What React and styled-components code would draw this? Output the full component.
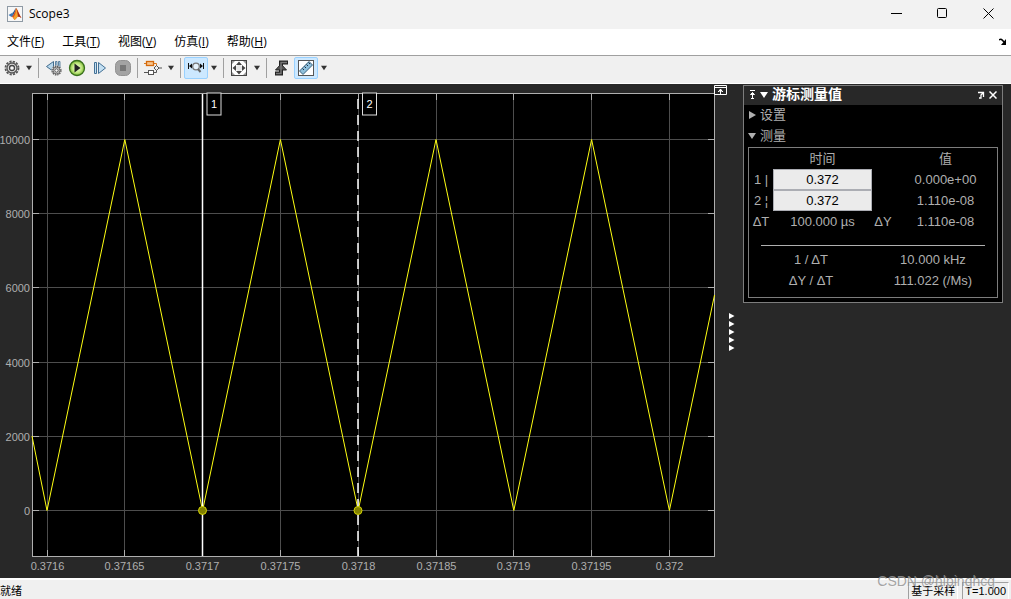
import React from 'react';
import styled, { createGlobalStyle } from 'styled-components';

const Global = createGlobalStyle`
  * { box-sizing: border-box; }
  body { margin: 0; background: #282828; }
  button, input { font: inherit; color: inherit; }
  button { padding: 0; margin: 0; border: 0; background: none; }
`;

const ui = '"Open Sans", "Noto Sans CJK SC", sans-serif';
const plain = '"Liberation Sans", "Noto Sans CJK SC", sans-serif';

const Window = styled.div`
  position: relative;
  display: flex;
  flex-direction: column;
  min-height: 100vh;
  background: #282828;
  color: #000;
  font: 12px/16px ${ui};
`;

const TitleBar = styled.header`
  display: flex;
  align-items: center;
  height: 29px;
  padding: 0 0 2px 7px;
  background: #f2f2f2;
`;

const Title = styled.h1`
  flex: 1;
  margin: 0 0 0 6px;
  font-size: 12px;
  font-weight: 400;
`;

const WindowButton = styled.button`
  display: grid;
  place-items: center;
  width: 46px;
  height: 27px;
`;

const MenuBar = styled.nav`
  display: flex;
  align-items: center;
  gap: 18px;
  height: 26px;
  padding: 0 4px 0 7px;
  background: #fff;
`;

const MenuButton = styled.button`
  white-space: nowrap;
`;

const DockButton = styled.button`
  display: flex;
  margin-left: auto;
`;

const ToolBar = styled.div`
  display: flex;
  align-items: center;
  height: 29px;
  padding: 0 0 3px;
  border-top: 1px solid #a0a0a0;
  border-bottom: 1px solid #fff;
  background: #f0f0f0;
`;

const Tool = styled.button`
  display: grid;
  place-items: center;
  width: ${p => p.$wide ? 24 : 23}px;
  height: 22px;
  border: 1px solid ${p => p.$on ? '#99d1ff' : 'transparent'};
  border-radius: 2px;
  background: ${p => p.$on ? '#cce8ff' : 'transparent'};
`;

const Arrow = styled.button`
  display: grid;
  place-items: center;
  width: 12px;
  height: 22px;
`;

const Divider = styled.div`
  width: 1px;
  height: 20px;
  margin: 0 3px;
  background: #a0a0a0;
`;

const Main = styled.main`
  display: flex;
  flex: 1;
`;

const PlotPane = styled.section`
  flex: 1;
  min-width: 0;
`;

const Plot = styled.svg`
  display: block;
  width: 100%;
  height: auto;
  font: 11px ${plain};
`;

const Splitter = styled.button`
  display: flex;
  align-items: center;
  width: 14px;
  padding-top: 2px;
`;

const Panel = styled.aside`
  align-self: flex-start;
  width: 260px;
  margin: 1px 8px 0 0;
  border: 1px solid #7d7d7d;
  background: #000;
  color: #afafaf;
  font: 13px/21px ${plain};
`;

const PanelHeader = styled.div`
  display: flex;
  align-items: center;
  gap: 4px;
  height: 19px;
  padding: 0 5px 2px;
  background: #282828;
  color: #fff;
`;

const PanelTitle = styled.h2`
  flex: 1;
  margin: 0;
  font-size: 14px;
  line-height: 17px;
  font-weight: 700;
`;

const IconButton = styled.button`
  display: flex;
`;

const Section = styled.button`
  display: flex;
  align-items: center;
  gap: 4px;
  width: 100%;
  height: 21px;
  padding: 0 0 2px 4px;
  text-align: left;
`;

const Measurements = styled.div`
  margin: 0 4px 4px;
  padding-bottom: 6px;
  border: 1px solid #7d7d7d;
`;

const Readings = styled.table`
  width: 100%;
  table-layout: fixed;
  border-collapse: collapse;
  th, td { height: 21px; padding: 0; font-weight: 400; text-align: center; white-space: nowrap; }
`;

const Rule = styled.hr`
  height: 1px;
  margin: 13px 12px 3px;
  border: 0;
  background: #afafaf;
`;

const TimeInput = styled.input`
  display: block;
  width: 100%;
  height: 21px;
  padding: 0;
  border: 1px solid #abadb3;
  background: #ebebeb;
  color: #000;
  text-align: center;
`;

const StatusBar = styled.footer`
  display: flex;
  align-items: flex-end;
  gap: 4px;
  height: 21px;
  padding-right: 2px;
  border-top: 2px solid #fff;
  background: #f0f0f0;
  font: 11px/16px ${plain};
`;

const Ready = styled.span`
  flex: 1;
`;

const StatusCell = styled.span`
  padding: 0 2px;
  border-top: 1px solid #a0a0a0;
  border-left: 1px solid #a0a0a0;
  border-right: 1px solid #fff;
  white-space: nowrap;
`;

const Watermark = styled.span`
  position: absolute;
  right: 16px;
  bottom: 8px;
  color: rgba(150, 150, 150, 0.85);
  font: 14px/20px ${plain};
  text-shadow: 1px 1px 0 rgba(255, 255, 255, 0.3);
  pointer-events: none;
`;

const Down = ({ size = 6, color = '#333' }) => (
  <svg width={size} height={size} viewBox="0 0 8 8"><path d="M0 1h8L4 7z" fill={color} /></svg>
);

const Gear = ({ size = 16 }) => (
  <svg width={size} height={size} viewBox="0 0 16 16" fill="none">
    <circle cx="8" cy="8" r="6.5" stroke="#555" strokeWidth="1.8" strokeDasharray="2.2 1.2" />
    <circle cx="8" cy="8" r="5" fill="#ddd" stroke="#555" strokeWidth="1.300" />
    <circle cx="8" cy="8" r="2.500" fill="#f7f7f7" stroke="#444" strokeWidth="1.300" />
  </svg>
);

const MatlabIcon = () => (
  <svg width="16" height="16" viewBox="0 0 16 16">
    <rect x=".5" y=".5" width="15" height="15" fill="#f7f7f7" stroke="#8f9aa5" />
    <path d="M1.500 9 5 7l2 2-2.500 2z" fill="#3b78b8" />
    <path d="M5 7c2-.5 2.500-4 4-5L7 9z" fill="#265b91" />
    <path d="M9 2c-1 3-2 7-4.500 9 2 0 2 2 3 3 2-1 2.500-3.500 4-3.500 1 0 1.800 1 3 1.500C12.500 9 10.500 3 9 2z" fill="#d9541e" />
    <path d="M9 2c0 4-.5 7-3 10l1.500 2c2-1 2.200-3.500 3.500-3.500C10.500 8 10 4 9 2z" fill="#f3a12b" />
    <path d="M9 2c1.500 2 3 7 5.500 10-1.200-.5-2-1.500-3.500-1.500C11 7 10 4 9 2z" fill="#9e2b1b" />
  </svg>
);

const StepBack = () => (
  <svg width="18" height="18" viewBox="0 0 18 18">
    <path d="M8.500 2.500v10L1.500 7.500z" fill="#b9d8ec" stroke="#416c8e" />
    <path d="M10.500 2.500h1.500v8h-1.500zM13.500 2.500h1.500v8h-1.500z" fill="#b9d8ec" stroke="#416c8e" strokeWidth=".8" />
    <circle cx="11.500" cy="11.500" r="5" fill="#f0f0f0" />
    <g transform="translate(6 6)"><Gear size={11} /></g>
  </svg>
);

const Run = () => (
  <svg width="18" height="18" viewBox="0 0 18 18">
    <defs><radialGradient id="run"><stop stopColor="#f4ffe0" /><stop offset=".6" stopColor="#c4ea85" /><stop offset="1" stopColor="#7bb832" /></radialGradient></defs>
    <circle cx="9" cy="9" r="7.500" fill="url(#run)" stroke="#39701d" strokeWidth="1.300" />
    <path d="M6.500 4.500 12.500 9l-6 4.500z" fill="#222" />
  </svg>
);

const StepForward = () => (
  <svg width="16" height="16" viewBox="0 0 16 16" fill="#c3dff2" stroke="#437095">
    <path d="M2.500 2.500h2v11h-2zM6.500 2.500 13.500 8l-7 5.500z" />
  </svg>
);

const Stop = () => (
  <svg width="18" height="18" viewBox="0 0 18 18">
    <rect x="1.500" y="1.500" width="15" height="15" rx="5" fill="#a3a3a3" stroke="#929292" />
    <path d="M6 6h6v6H6z" fill="#777" />
  </svg>
);

const Blocks = () => (
  <svg width="18" height="18" viewBox="0 0 18 18" fill="none">
    <path d="M0 13.500h4M9 13.500h3.500v-2.500M15 9h3" stroke="#555" />
    <path d="M0 4.500h3M9 4.500h3.500v2.500" stroke="#d97a20" />
    <rect x="2.500" y="2.500" width="7" height="4" fill="#f8c58e" stroke="#d4690c" strokeWidth="1.300" />
    <rect x="4.500" y="11.500" width="5" height="4" fill="#fff" stroke="#555" />
    <path d="m12.500 6.500 2.500 2.500-2.500 2.500L10 9z" fill="#eee" stroke="#555" />
  </svg>
);

const ZoomX = () => (
  <svg width="18" height="16" viewBox="0 0 18 16" fill="none">
    <path d="M1.500 3v6M16.500 3v6" stroke="#111" />
    <path d="M2 6l3-2.500v5zM16 6 13 3.500v5z" fill="#111" />
    <circle cx="9" cy="6.500" r="3.300" fill="#e6f3fd" stroke="#777" strokeWidth="1.300" />
    <path d="m11 9 2.500 3" stroke="#666" strokeWidth="2" />
  </svg>
);

const Fit = () => (
  <svg width="18" height="18" viewBox="0 0 18 18">
    <rect x="1.500" y="1.500" width="15" height="15" fill="#fff" stroke="#444" />
    <path d="M2 2h3L2 5zM16 2v3l-3-3zM2 16v-3l3 3zM16 16h-3l3-3z" fill="#999" />
    <path d="m9 2.500 3 3.500H6zM9 15.500l3-3.500H6zM2.500 9 6 6v6zM15.500 9 12 6v6z" fill="#444" />
    <circle cx="9" cy="9" r="3" fill="#e6e6e6" />
  </svg>
);

const Trigger = () => (
  <svg width="16" height="18" viewBox="0 0 16 18">
    <path d="M1 14.500h6V3.500h7" fill="none" stroke="#222" strokeWidth="4" />
    <path d="m7 5-5.500 6h11z" fill="#555" stroke="#222" />
    <path d="M2 14.500h5V3.500h6" fill="none" stroke="#777" strokeWidth="1.500" />
  </svg>
);

const Ruler = () => (
  <svg width="18" height="18" viewBox="0 0 18 18">
    <rect x="1.500" y="1.500" width="15" height="15" fill="#fff" stroke="#555" />
    <path d="M2.500 12 12 2.500 15.500 6 6 15.500z" fill="#8fc0dc" stroke="#37617e" />
    <path d="m5.500 9.500 1.500 1.500M7.500 7.500 9 9M9.500 5.500 11 7M11.500 3.500 13 5" stroke="#234" />
  </svg>
);

const menus = [['文件', 'F'], ['工具', 'T'], ['视图', 'V'], ['仿真', 'I'], ['帮助', 'H']];

const times = ['0.3716', '0.37165', '0.3717', '0.37175', '0.3718', '0.37185', '0.3719', '0.37195', '0.372'];
const levels = [10000, 8000, 6000, 4000, 2000, 0];
const xAt = i => Math.floor(47 + i * 77.8) + 0.5;
const yAt = value => Math.round(426 - value * 0.0371) + 0.5;
const wave = [
  '32,352',
  ...times.map((_, i) => `${47 + i * 77.8},${i % 2 ? 55.5 : 426.5}`),
  '714.5,211',
].join(' ');

function Cursor({ x, label, dashed }) {
  return (
    <g>
      <path d={`M${x} 10V472`} stroke="#fff" strokeWidth="1.500" strokeDasharray={dashed ? '10 6' : undefined} strokeDashoffset={dashed ? -5 : undefined} />
      <circle cx={x} cy="426.500" r="4" fill="#807f00" stroke="#d5d500" />
      <rect x={x + 4.5} y="9" width="14" height="22" fill="#000" stroke="#ddd" />
      <text x={x + 11.5} y="24" fill="#fff" textAnchor="middle">{label}</text>
    </g>
  );
}

function ScopePlot() {
  return (
    <Plot viewBox="0 0 729 494" role="img" aria-label="Scope signal">
      <rect x="32" y="9" width="683" height="464" fill="#000" />
      {times.map((t, i) => (
        <g key={t}>
          <path d={`M${xAt(i)} 10V472`} stroke="#4d4d4d" />
          <path d={`M${xAt(i)} 10v6M${xAt(i)} 472v-6`} stroke="#afafaf" />
          <text x={xAt(i)} y="486" fill="#afafaf" textAnchor="middle">{t}</text>
        </g>
      ))}
      {levels.map(v => (
        <g key={v}>
          <path d={`M33 ${yAt(v)}H714`} stroke="#4d4d4d" />
          <path d={`M33 ${yAt(v)}h6M714 ${yAt(v)}h-6`} stroke="#afafaf" />
          <text x="30" y={yAt(v) + 4} fill="#afafaf" textAnchor="end">{v}</text>
        </g>
      ))}
      <rect x="32.500" y="9.500" width="682" height="463" fill="none" stroke="#afafaf" />
      <polyline points={wave} fill="none" stroke="#ffff12" />
      <Cursor x={202.5} label="1" />
      <Cursor x={358} label="2" dashed />
      <g fill="none" stroke="#fff">
        <path d="M714.500 1.500h12v9h-12z" fill="#282828" />
        <path d="M715 3.500h11M720.500 10V5M718 8l2.500-2.500L723 8" />
        <path d="M719 7h3l-1.500-2z" fill="#fff" />
      </g>
    </Plot>
  );
}

export default function App() {
  return (
    <Window>
      <Global />
      <TitleBar>
        <MatlabIcon />
        <Title>Scope3</Title>
        <WindowButton aria-label="Minimize"><svg width="11" height="11"><path d="M0 5.500h11" stroke="#000" /></svg></WindowButton>
        <WindowButton aria-label="Maximize"><svg width="11" height="11"><rect x=".5" y=".5" width="9" height="9" rx="1" fill="none" stroke="#000" /></svg></WindowButton>
        <WindowButton aria-label="Close"><svg width="11" height="11"><path d="m.5.5 10 10M10.500.5l-10 10" stroke="#000" /></svg></WindowButton>
      </TitleBar>
      <MenuBar>
        {menus.map(([name, key]) => <MenuButton key={key}>{name}(<u>{key}</u>)</MenuButton>)}
        <DockButton aria-label="Dock window"><svg width="8" height="8" viewBox="0 0 8 8"><path d="M0 2c2-1.500 3-.5 5 2" fill="none" stroke="#000" strokeWidth="1.500" /><path d="M7 1v6H2z" fill="#000" /></svg></DockButton>
      </MenuBar>
      <ToolBar>
        <Tool aria-label="Settings"><Gear /></Tool>
        <Arrow aria-label="Settings menu"><Down /></Arrow>
        <Divider />
        <Tool aria-label="Step back"><StepBack /></Tool>
        <Tool aria-label="Run"><Run /></Tool>
        <Tool aria-label="Step forward"><StepForward /></Tool>
        <Tool aria-label="Stop"><Stop /></Tool>
        <Divider />
        <Tool $wide aria-label="Highlight block"><Blocks /></Tool>
        <Arrow aria-label="Block menu"><Down /></Arrow>
        <Divider />
        <Tool $wide $on aria-label="Zoom X"><ZoomX /></Tool>
        <Arrow aria-label="Zoom menu"><Down /></Arrow>
        <Divider />
        <Tool $wide aria-label="Fit to view"><Fit /></Tool>
        <Arrow aria-label="Fit menu"><Down /></Arrow>
        <Divider />
        <Tool $wide aria-label="Triggers"><Trigger /></Tool>
        <Tool $wide $on aria-label="Cursor measurements"><Ruler /></Tool>
        <Arrow aria-label="Measurements menu"><Down /></Arrow>
      </ToolBar>
      <Main>
        <PlotPane><ScopePlot /></PlotPane>
        <Splitter aria-label="Collapse panel">
          <svg width="6" height="40" viewBox="0 0 6 40" fill="#fff">
            {[0, 8, 16, 24, 32].map(y => <path key={y} d={`M0 ${y + 1}l5.500 3-5.500 3z`} />)}
          </svg>
        </Splitter>
        <Panel>
          <PanelHeader>
            <IconButton aria-label="Pin"><svg width="7" height="9" viewBox="0 0 7 9" fill="none" stroke="#fff"><path d="M1 .5h5M3.500 2.500V9M2 8.500h3" /><path d="M1.500 4.500h4l-2-2z" fill="#fff" /></svg></IconButton>
            <Down size={8} color="#fff" />
            <PanelTitle>游标测量值</PanelTitle>
            <IconButton aria-label="Undock"><svg width="8" height="8" viewBox="0 0 8 8" fill="none" stroke="#fff"><path d="M1 1.500h5.500V6M6 2 4 4v3H2" strokeWidth="1.300" /></svg></IconButton>
            <IconButton aria-label="Close panel"><svg width="8" height="8" viewBox="0 0 8 8" stroke="#fff" strokeWidth="1.500"><path d="m.5.5 7 7M7.500.5l-7 7" /></svg></IconButton>
          </PanelHeader>
          <Section><svg width="8" height="8" viewBox="0 0 8 8"><path d="M1 0v8l7-4z" fill="#afafaf" /></svg>设置</Section>
          <Section><Down size={8} color="#afafaf" />测量</Section>
          <Measurements>
            <Readings>
              <colgroup><col width="24" /><col width="99" /><col width="22" /><col /></colgroup>
              <thead><tr><th /><th>时间</th><th /><th>值</th></tr></thead>
              <tbody>
                <tr><td><label htmlFor="t1">1 |</label></td><td><TimeInput id="t1" defaultValue="0.372" /></td><td /><td>0.000e+00</td></tr>
                <tr><td><label htmlFor="t2">2 ¦</label></td><td><TimeInput id="t2" defaultValue="0.372" /></td><td /><td>1.110e-08</td></tr>
                <tr><td>ΔT</td><td>100.000 µs</td><td>ΔY</td><td>1.110e-08</td></tr>
              </tbody>
            </Readings>
            <Rule />
            <Readings>
              <colgroup><col width="124" /><col width="120" /><col /></colgroup>
              <tbody>
                <tr><td>1 / ΔT</td><td>10.000 kHz</td><td /></tr>
                <tr><td>ΔY / ΔT</td><td>111.022 (/Ms)</td><td /></tr>
              </tbody>
            </Readings>
          </Measurements>
        </Panel>
      </Main>
      <StatusBar>
        <Ready>就绪</Ready>
        <StatusCell>基于采样</StatusCell>
        <StatusCell>T=1.000</StatusCell>
      </StatusBar>
      <Watermark>CSDN @hlpinghcg</Watermark>
    </Window>
  );
}
